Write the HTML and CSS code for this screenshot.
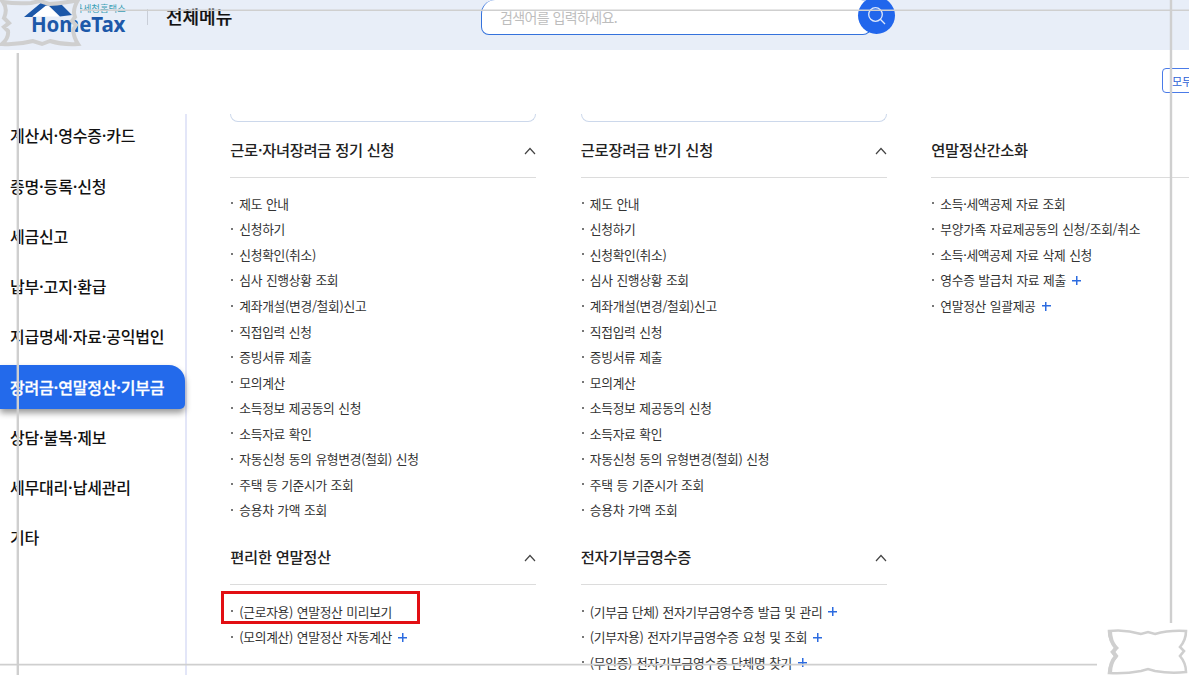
FILE: index.html
```
<!DOCTYPE html>
<html lang="ko">
<head>
    <meta charset="UTF-8">
    <meta name="viewport" content="width=device-width, initial-scale=1.0">
    <title>HomeTax 전체메뉴</title>
    <link rel="stylesheet" href="styles.css">
</head>
<body>

    <header class="header">
        <div class="logo">
            <svg class="logo-roof" width="50" height="20" viewBox="0 0 50 20">
                <path d="M0 16 L18 1 H35 L48 14 L36 15.5 L24 4 L12 13 L8 16 Z" fill="#1d58a9"/>
                <path d="M9 15 L22 4.5 L25 5.5 L35 15.5 H12 Z" fill="#fff"/>
            </svg>
            <span class="logo-sub">국세청홈택스</span>
            <span class="logo-name">HomeTax</span>
        </div>
        <h1 class="page-title">전체메뉴</h1>
        <div class="search">
            <div class="search-box">검색어를 입력하세요.</div>
            <button class="search-btn">
                <svg width="20" height="20" viewBox="0 0 20 20" fill="none" stroke="#dfe8fb" stroke-width="1.3">
                    <circle cx="8.5" cy="8.5" r="6.8"/>
                    <path d="M13.3 13.3 L18 18"/>
                </svg>
            </button>
        </div>
    </header>

    <div class="toolbar">
        <button class="open-all">모두펼치기</button>
    </div>

    <main class="content">
        <nav class="side">
            <a class="side-item">계산서·영수증·카드</a>
            <a class="side-item">증명·등록·신청</a>
            <a class="side-item">세금신고</a>
            <a class="side-item">납부·고지·환급</a>
            <a class="side-item">지급명세·자료·공익법인</a>
            <a class="side-item active">장려금·연말정산·기부금</a>
            <a class="side-item">상담·불복·제보</a>
            <a class="side-item">세무대리·납세관리</a>
            <a class="side-item">기타</a>
        </nav>

        <div class="columns">
            <div class="column">
                <div class="box-end"></div>
                <section class="group first">
                    <h2>근로·자녀장려금 정기 신청 <svg class="arrow" viewBox="0 0 12 8"><path d="M1 7 L6 1.5 L11 7"/></svg></h2>
                    <ul>
                        <li>제도 안내</li>
                        <li>신청하기</li>
                        <li>신청확인(취소)</li>
                        <li>심사 진행상황 조회</li>
                        <li>계좌개설(변경/철회)신고</li>
                        <li>직접입력 신청</li>
                        <li>증빙서류 제출</li>
                        <li>모의계산</li>
                        <li>소득정보 제공동의 신청</li>
                        <li>소득자료 확인</li>
                        <li>자동신청 동의 유형변경(철회) 신청</li>
                        <li>주택 등 기준시가 조회</li>
                        <li>승용차 가액 조회</li>
                    </ul>
                </section>
                <section class="group">
                    <h2>편리한 연말정산 <svg class="arrow" viewBox="0 0 12 8"><path d="M1 7 L6 1.5 L11 7"/></svg></h2>
                    <ul>
                        <li class="marked">(근로자용) 연말정산 미리보기</li>
                        <li class="more">(모의계산) 연말정산 자동계산</li>
                    </ul>
                </section>
            </div>

            <div class="column">
                <div class="box-end"></div>
                <section class="group first">
                    <h2>근로장려금 반기 신청 <svg class="arrow" viewBox="0 0 12 8"><path d="M1 7 L6 1.5 L11 7"/></svg></h2>
                    <ul>
                        <li>제도 안내</li>
                        <li>신청하기</li>
                        <li>신청확인(취소)</li>
                        <li>심사 진행상황 조회</li>
                        <li>계좌개설(변경/철회)신고</li>
                        <li>직접입력 신청</li>
                        <li>증빙서류 제출</li>
                        <li>모의계산</li>
                        <li>소득정보 제공동의 신청</li>
                        <li>소득자료 확인</li>
                        <li>자동신청 동의 유형변경(철회) 신청</li>
                        <li>주택 등 기준시가 조회</li>
                        <li>승용차 가액 조회</li>
                    </ul>
                </section>
                <section class="group">
                    <h2>전자기부금영수증 <svg class="arrow" viewBox="0 0 12 8"><path d="M1 7 L6 1.5 L11 7"/></svg></h2>
                    <ul>
                        <li class="more">(기부금 단체) 전자기부금영수증 발급 및 관리</li>
                        <li class="more">(기부자용) 전자기부금영수증 요청 및 조회</li>
                        <li class="more">(무인증) 전자기부금영수증 단체명 찾기</li>
                    </ul>
                </section>
            </div>

            <div class="column">
                <div class="box-end empty"></div>
                <section class="group first">
                    <h2>연말정산간소화</h2>
                    <ul>
                        <li>소득·세액공제 자료 조회</li>
                        <li>부양가족 자료제공동의 신청/조회/취소</li>
                        <li>소득·세액공제 자료 삭제 신청</li>
                        <li class="more">영수증 발급처 자료 제출</li>
                        <li class="more">연말정산 일괄제공</li>
                    </ul>
                </section>
            </div>
        </div>
    </main>

    <!-- decorative frame over the page -->
    <svg class="frame" width="1189" height="675" viewBox="0 0 1189 675" fill="none" stroke="#cfcfcf">
        <path d="M80 10.3 H1189" stroke-width="1.6"/>
        <path d="M17.8 53 V675" stroke-width="2.4"/>
        <path d="M1171 0 V623" stroke-width="2.4"/>
        <path d="M0 664.7 H1097" stroke-width="1.8"/>
        <path d="M3 2 Q16 4 31 3 L40 1 L49 4 Q65 3 78 0 Q72 10 75 17 L72 21 L76 25 L73 30 Q74 38 78 44 Q63 45 50 41 L42 44 L33 41 Q18 45 2 44 Q9 38 8 31 L4 27 L9 23 L4 18 Q8 9 3 2 Z" stroke-width="4"/>
        <path d="M1109 631 Q1125 629 1141 634 L1148 632 L1155 634 Q1169 630 1186 631 Q1186 640 1180 647 L1184 651 L1180 656 Q1186 663 1186 672 Q1171 674 1155 671 L1148 669 L1141 671 Q1125 674 1109 673 Q1110 663 1116 657 L1112 652 L1117 648 Q1109 641 1109 631 Z" stroke-width="2.6"/>
        <path d="M1110 631 Q1110 641 1116 648 L1113 652 L1116 656 Q1110 663 1110 673" stroke-width="4"/>
    </svg>

</body>
</html>
```
FILE: styles.css
```
* {
    box-sizing: border-box;
}
body {
    margin: 0;
    width: 1189px;
    height: 675px;
    overflow: hidden;
    position: relative;
    background: #fff;
    color: #222;
    font-family: "Noto Sans CJK KR", sans-serif;
}
h1, h2, ul {
    margin: 0;
    padding: 0;
}
button {
    font-family: inherit;
    padding: 0;
}

/* header */
.header {
    height: 50px;
    display: flex;
    align-items: flex-start;
    background: #e8eef8;
}
.logo {
    position: relative;
    width: 148px;
    height: 34px;
    flex: none;
}
.logo::after {
    content: "";
    position: absolute;
    right: 0;
    top: 9px;
    width: 1px;
    height: 16px;
    background: #c9ced8;
}
.logo-roof {
    position: absolute;
    left: 24px;
    top: 1px;
}
.logo-sub {
    position: absolute;
    left: 74px;
    top: 2px;
    font-size: 9.4px;
    line-height: 12px;
    color: #3d9fb5;
    white-space: nowrap;
    clip-path: inset(0 0 0 6px);
}
.logo-name {
    position: absolute;
    left: 31px;
    top: 14px;
    font: 700 20.5px/20px "Noto Sans", sans-serif;
    letter-spacing: -0.1px;
    color: #1d58a9;
}
.page-title {
    width: 333px;
    padding-left: 18px;
    font-size: 18px;
    line-height: 33px;
    font-weight: 500;
    color: #111;
    -webkit-text-stroke: 0.2px #111;
}
.search {
    display: flex;
}
.search-box {
    width: 390px;
    height: 35px;
    padding-left: 18px;
    border: 1px solid #3472dc;
    border-top: none;
    border-radius: 14px 10px 8px 8px;
    background: #fff;
    color: #bdbdbd;
    font-size: 14px;
    line-height: 34px;
    letter-spacing: -0.6px;
}
.search-btn {
    width: 37px;
    height: 37px;
    margin: -3px 0 0 -13px;
    border: none;
    border-radius: 50%;
    background: #2166ec;
    display: flex;
    align-items: center;
    justify-content: center;
}

/* toolbar */
.toolbar {
    height: 64px;
    padding: 18px 0 0 1162px;
}
.open-all {
    display: block;
    width: 80px;
    height: 25px;
    padding-left: 9px;
    border: 1px solid #4a7be8;
    border-radius: 4px;
    background: #fff;
    color: #2c62d6;
    font-size: 11px;
    text-align: left;
}

/* content */
.content {
    display: flex;
    height: 561px;
    overflow: hidden;
}
.side {
    width: 187px;
    flex: none;
    border-right: 2px solid #e3e6f8;
}
.side-item {
    display: flex;
    align-items: center;
    height: 44px;
    margin-bottom: 6.25px;
    padding-bottom: 1.5px;
    padding-left: 10px;
    font-size: 16px;
    font-weight: 500;
    letter-spacing: -0.2px;
    color: #111;
    white-space: nowrap;
}
.side-item.active {
    background: #236aeb;
    color: #fff;
    border-radius: 0 16px 5px 0;
    box-shadow: 0 4px 6px rgba(0, 0, 0, 0.4);
    -webkit-text-stroke: 0.3px #fff;
}
.columns {
    display: flex;
    gap: 44.5px;
    padding-left: 43.3px;
}
.column {
    width: 306px;
    flex: none;
}
.box-end {
    height: 7.5px;
    border: 1.5px solid #ccd8eb;
    border-top: none;
    border-radius: 0 0 9px 9px;
}
.box-end.empty {
    border-color: transparent;
}
.group.first {
    height: 407.9px;
}
.group h2 {
    display: flex;
    align-items: center;
    justify-content: space-between;
    height: 56px;
    padding-bottom: 1px;
    border-bottom: 1px solid #dcdcdc;
    font-size: 15.3px;
    font-weight: 500;
    letter-spacing: -0.28px;
    color: #222;
}
.arrow {
    width: 12px;
    height: 8px;
    margin-top: 4px;
    fill: none;
    stroke: #444;
    stroke-width: 1.2;
}
.group ul {
    padding-top: 13.2px;
    list-style: none;
}
.group li {
    position: relative;
    display: flex;
    align-items: center;
    height: 25.52px;
    font-size: 12.75px;
    letter-spacing: -0.3px;
    word-spacing: 0.5px;
    color: #333;
    white-space: nowrap;
}
.group li::before {
    content: "";
    width: 2px;
    height: 2px;
    margin: 0 6px 0 1px;
    background: #777;
}
.more::after {
    content: "";
    width: 9px;
    height: 9px;
    margin: 1px 0 0 6px;
    background:
        linear-gradient(#2c6be0, #2c6be0) center / 9px 1.5px no-repeat,
        linear-gradient(#2c6be0, #2c6be0) center / 1.5px 9px no-repeat;
}

/* red highlight box */
.group .marked {
    z-index: 1;
    width: 199px;
    height: 33px;
    margin: -8px 0 0.52px -9px;
    padding: 8px 0 0 6px;
    border: 3px solid #e20f13;
}
.frame {
    position: absolute;
    left: 0;
    top: 0;
    pointer-events: none;
}
```
